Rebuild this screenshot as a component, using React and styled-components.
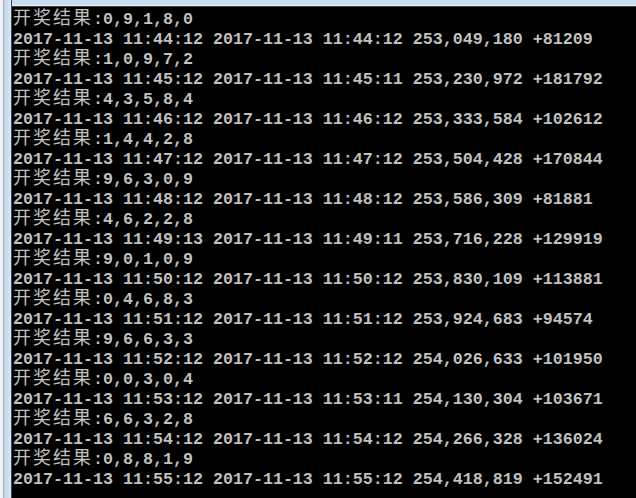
import React from "react";
import styled, { createGlobalStyle } from "styled-components";

const Global = createGlobalStyle`
  html, body { margin: 0; padding: 0; background: #000; }
  body { width: 636px; height: 498px; overflow: hidden; }
`;

const Window = styled.div`
  display: flex;
  width: 636px;
  height: 498px;
  overflow: hidden;
  background: #000;
`;

const LeftFrame = styled.div`
  flex: 0 0 12px;
  height: 100%;
  background: linear-gradient(
    to right,
    #f2f4f7 0px,
    #f2f4f7 3px,
    #9fb0c2 3px,
    #9fb0c2 4px,
    #c3d6eb 4px,
    #d6e3f2 10px,
    #e4ecf6 11px,
    #3c4650 11px,
    #3c4650 12px
  );
`;

const Main = styled.div`
  flex: 1;
  display: flex;
  flex-direction: column;
  min-width: 0;
`;

const TopFrame = styled.div`
  flex: 0 0 7px;
  background: linear-gradient(
    to bottom,
    #c6daef 0px,
    #cadef2 5px,
    #e8f0f9 5px,
    #e8f0f9 6px,
    #3c4650 6px,
    #3c4650 7px
  );
`;

const Console = styled.div`
  flex: 1;
  background: #000;
  padding: 3px 0 0 1px;
  color: #c0c0c0;
  font-family: "Liberation Mono", "DejaVu Sans Mono", monospace;
  font-weight: bold;
  font-size: 16.667px;
  overflow: hidden;
`;

const Line = styled.div`
  height: 20px;
  line-height: 20px;
  white-space: pre;
`;

const Cjk = styled.span`
  font-family: "Noto Sans CJK SC", "Noto Sans CJK JP", sans-serif;
  font-weight: normal;
  font-size: 18px;
  letter-spacing: 2px;
  line-height: 0;
`;

const results = [
  "0,9,1,8,0",
  "1,0,9,7,2",
  "4,3,5,8,4",
  "1,4,4,2,8",
  "9,6,3,0,9",
  "4,6,2,2,8",
  "9,0,1,0,9",
  "0,4,6,8,3",
  "9,6,6,3,3",
  "0,0,3,0,4",
  "6,6,3,2,8",
  "0,8,8,1,9",
];

const stamps = [
  "2017-11-13 11:44:12 2017-11-13 11:44:12 253,049,180 +81209",
  "2017-11-13 11:45:12 2017-11-13 11:45:11 253,230,972 +181792",
  "2017-11-13 11:46:12 2017-11-13 11:46:12 253,333,584 +102612",
  "2017-11-13 11:47:12 2017-11-13 11:47:12 253,504,428 +170844",
  "2017-11-13 11:48:12 2017-11-13 11:48:12 253,586,309 +81881",
  "2017-11-13 11:49:13 2017-11-13 11:49:11 253,716,228 +129919",
  "2017-11-13 11:50:12 2017-11-13 11:50:12 253,830,109 +113881",
  "2017-11-13 11:51:12 2017-11-13 11:51:12 253,924,683 +94574",
  "2017-11-13 11:52:12 2017-11-13 11:52:12 254,026,633 +101950",
  "2017-11-13 11:53:12 2017-11-13 11:53:11 254,130,304 +103671",
  "2017-11-13 11:54:12 2017-11-13 11:54:12 254,266,328 +136024",
  "2017-11-13 11:55:12 2017-11-13 11:55:12 254,418,819 +152491",
];

export default function App() {
  return (
    <>
      <Global />
      <Window>
        <LeftFrame />
        <Main>
          <TopFrame />
          <Console>
            {results.map((r, i) => (
              <React.Fragment key={i}>
                <Line>
                  <Cjk>开奖结果</Cjk>:{r}
                </Line>
                <Line>{stamps[i]}</Line>
              </React.Fragment>
            ))}
          </Console>
        </Main>
      </Window>
    </>
  );
}
